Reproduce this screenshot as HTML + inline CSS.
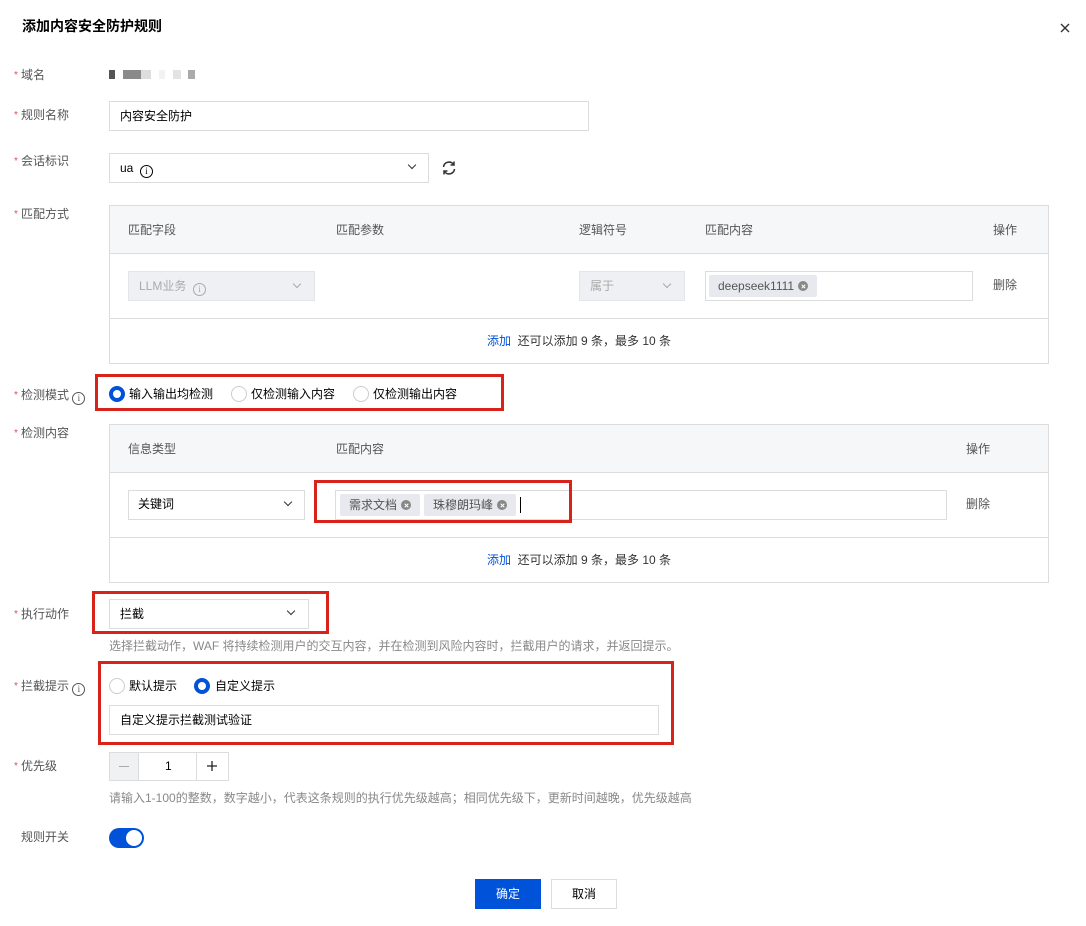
<!DOCTYPE html>
<html><head><meta charset="utf-8"><style>
*{box-sizing:border-box;margin:0;padding:0}
body{width:1086px;height:926px;background:#fff;position:relative;font-family:"Liberation Sans","Noto Sans CJK SC",sans-serif;font-size:12px;color:#000;overflow:hidden}
.a{position:absolute}
.lbl{position:absolute;left:21px;color:#555;font-size:12px;line-height:14px}
.lbl:before{content:"*";color:#e34d59;position:absolute;left:-7px;top:1px;font-size:10px}
.box{position:absolute;border:1px solid #dcdcdc;background:#fff}
.t{position:absolute;line-height:14px;white-space:nowrap}
.g{color:#555}
.red{position:absolute;border:3px solid #d8231b}
.chev{position:absolute;width:6px;height:6px;border-right:1.5px solid #333;border-bottom:1.5px solid #333;transform:rotate(45deg)}
.tag{position:absolute;background:#e7e9ef;color:#555;height:22px;line-height:22px;padding:0 9px;border-radius:2px;font-size:12px}
.x{display:inline-block;width:10px;height:10px;border-radius:50%;background:#888;margin-left:4px;vertical-align:-1px;position:relative}
.x:before,.x:after{content:"";position:absolute;left:4.5px;top:2.5px;width:1px;height:5px;background:#fff;transform:rotate(45deg)}
.x:after{transform:rotate(-45deg)}
.rad{position:absolute;width:16px;height:16px;border-radius:50%;border:1px solid #ccc;background:#fff}
.rad.on{border:4px solid #0052d9}
.info{display:inline-block;width:13px;height:13px;border:1px solid #555;border-radius:50%;font-size:9px;line-height:11px;text-align:center;color:#555;vertical-align:-2px;font-family:"Liberation Serif",serif}
</style></head><body>
<div class="t" style="left:22px;top:18px;font-size:14px;font-weight:bold;line-height:16px">添加内容安全防护规则</div>
<svg class="a" style="left:1060px;top:23px" width="10" height="10" viewBox="0 0 10 10" stroke="#333" stroke-width="1.4"><path d="M1 1L9 9M9 1L1 9"/></svg>

<div class="lbl" style="top:68px">域名</div>
<div class="a" style="left:109px;top:70px;width:6px;height:9px;background:#555"></div>
<div class="a" style="left:123px;top:70px;width:18px;height:9px;background:#8a8a8a"></div>
<div class="a" style="left:141px;top:70px;width:10px;height:9px;background:#ddd"></div>
<div class="a" style="left:159px;top:70px;width:6px;height:9px;background:#f2f2f2"></div>
<div class="a" style="left:173px;top:70px;width:8px;height:9px;background:#e3e3e3"></div>
<div class="a" style="left:188px;top:70px;width:7px;height:9px;background:#aaa"></div>

<div class="lbl" style="top:108px">规则名称</div>
<div class="box" style="left:109px;top:101px;width:480px;height:30px"></div>
<div class="t" style="left:120px;top:109px">内容安全防护</div>

<div class="lbl" style="top:154px">会话标识</div>
<div class="box" style="left:109px;top:153px;width:320px;height:30px"></div>
<div class="t" style="left:120px;top:161px">ua &nbsp;<span class="info" style="border-color:#000;color:#000">i</span></div>
<div class="chev" style="left:409px;top:162px"></div>
<svg class="a" style="left:441px;top:160px" width="16" height="16" viewBox="0 0 16 16" fill="none" stroke="#333" stroke-width="1.5"><path d="M2.5 7a5.5 5.5 0 0 1 10-2.5M13.5 9a5.5 5.5 0 0 1-10 2.5"/><path d="M13 1.5v3.5h-3.5M3 14.5v-3.5h3.5"/></svg>

<div class="lbl" style="top:207px">匹配方式</div>
<div class="box" style="left:109px;top:205px;width:940px;height:159px"></div>
<div class="a" style="left:110px;top:206px;width:938px;height:48px;background:#f6f7f9;border-bottom:1px solid #dcdcdc"></div>
<div class="a" style="left:110px;top:318px;width:938px;height:1px;background:#dcdcdc"></div>
<div class="t g" style="left:128px;top:223px">匹配字段</div>
<div class="t g" style="left:336px;top:223px">匹配参数</div>
<div class="t g" style="left:579px;top:223px">逻辑符号</div>
<div class="t g" style="left:705px;top:223px">匹配内容</div>
<div class="t g" style="left:993px;top:223px">操作</div>
<div class="box" style="left:128px;top:271px;width:187px;height:30px;background:#eef0f3;border-color:#e3e5e9"></div>
<div class="t" style="left:139px;top:279px;color:#aaa">LLM业务 &nbsp;<span class="info" style="border-color:#aaa;color:#aaa">i</span></div>
<div class="chev" style="left:294px;top:281px;border-color:#aaa;border-width:1px"></div>
<div class="box" style="left:579px;top:271px;width:106px;height:30px;background:#eef0f3;border-color:#e3e5e9"></div>
<div class="t" style="left:590px;top:279px;color:#aaa">属于</div>
<div class="chev" style="left:664px;top:281px;border-color:#aaa;border-width:1px"></div>
<div class="box" style="left:705px;top:271px;width:268px;height:30px"></div>
<div class="tag" style="left:709px;top:275px">deepseek1111<span class="x"></span></div>
<div class="t g" style="left:993px;top:278px">删除</div>
<div class="t" style="left:487px;top:334px;color:#333"><span style="color:#0052d9">添加</span>&nbsp; 还可以添加 9 条，最多 10 条</div>

<div class="red" style="left:95px;top:374px;width:409px;height:37px"></div>
<div class="lbl" style="top:388px">检测模式 <span class="info">i</span></div>
<div class="rad on" style="left:109px;top:386px"></div>
<div class="t" style="left:129px;top:387px">输入输出均检测</div>
<div class="rad" style="left:231px;top:386px"></div>
<div class="t" style="left:251px;top:387px">仅检测输入内容</div>
<div class="rad" style="left:353px;top:386px"></div>
<div class="t" style="left:373px;top:387px">仅检测输出内容</div>

<div class="lbl" style="top:426px">检测内容</div>
<div class="box" style="left:109px;top:424px;width:940px;height:159px"></div>
<div class="a" style="left:110px;top:425px;width:938px;height:48px;background:#f6f7f9;border-bottom:1px solid #dcdcdc"></div>
<div class="a" style="left:110px;top:537px;width:938px;height:1px;background:#dcdcdc"></div>
<div class="t g" style="left:128px;top:442px">信息类型</div>
<div class="t g" style="left:336px;top:442px">匹配内容</div>
<div class="t g" style="left:966px;top:442px">操作</div>
<div class="box" style="left:128px;top:490px;width:177px;height:30px"></div>
<div class="t" style="left:138px;top:497px">关键词</div>
<div class="chev" style="left:285px;top:499px"></div>
<div class="box" style="left:335px;top:490px;width:612px;height:30px"></div>
<div class="tag" style="left:340px;top:494px">需求文档<span class="x"></span></div>
<div class="tag" style="left:424px;top:494px">珠穆朗玛峰<span class="x"></span></div>
<div class="a" style="left:520px;top:497px;width:1px;height:16px;background:#000"></div>
<div class="red" style="left:314px;top:480px;width:258px;height:43px"></div>
<div class="t g" style="left:966px;top:497px">删除</div>
<div class="t" style="left:487px;top:553px;color:#333"><span style="color:#0052d9">添加</span>&nbsp; 还可以添加 9 条，最多 10 条</div>

<div class="lbl" style="top:607px">执行动作</div>
<div class="box" style="left:109px;top:599px;width:200px;height:30px"></div>
<div class="t" style="left:120px;top:607px">拦截</div>
<div class="chev" style="left:288px;top:608px"></div>
<div class="red" style="left:92px;top:591px;width:237px;height:43px"></div>
<div class="t" style="left:109px;top:639px;color:#888">选择拦截动作，WAF 将持续检测用户的交互内容，并在检测到风险内容时，拦截用户的请求，并返回提示。</div>

<div class="lbl" style="top:679px">拦截提示 <span class="info">i</span></div>
<div class="rad" style="left:109px;top:678px"></div>
<div class="t" style="left:129px;top:679px">默认提示</div>
<div class="rad on" style="left:194px;top:678px"></div>
<div class="t" style="left:215px;top:679px">自定义提示</div>
<div class="box" style="left:109px;top:705px;width:550px;height:30px"></div>
<div class="t" style="left:120px;top:713px">自定义提示拦截测试验证</div>
<div class="red" style="left:98px;top:661px;width:576px;height:84px"></div>

<div class="lbl" style="top:759px">优先级</div>
<div class="box" style="left:109px;top:752px;width:120px;height:29px"></div>
<div class="a" style="left:110px;top:753px;width:29px;height:27px;background:#f0f1f3;border-right:1px solid #dcdcdc"></div>
<div class="a" style="left:119px;top:766px;width:10px;height:1px;background:#aaa"></div>
<div class="t" style="left:165px;top:759px">1</div>
<div class="a" style="left:196px;top:753px;width:1px;height:27px;background:#dcdcdc"></div>
<svg class="a" style="left:207px;top:761px" width="10" height="10" viewBox="0 0 10 10" stroke="#222" stroke-width="1.3"><path d="M5 0V10M0 5H10"/></svg>
<div class="t" style="left:109px;top:791px;color:#888">请输入1-100的整数，数字越小，代表这条规则的执行优先级越高；相同优先级下，更新时间越晚，优先级越高</div>

<div class="t g" style="left:21px;top:830px">规则开关</div>
<div class="a" style="left:109px;top:828px;width:35px;height:20px;border-radius:10px;background:#0052d9"></div>
<div class="a" style="left:126px;top:830px;width:16px;height:16px;border-radius:50%;background:#fff"></div>

<div class="a" style="left:475px;top:879px;width:66px;height:30px;background:#0052d9;color:#fff;text-align:center;line-height:30px">确定</div>
<div class="a" style="left:551px;top:879px;width:66px;height:30px;border:1px solid #dcdcdc;text-align:center;line-height:28px">取消</div>
</body></html>
